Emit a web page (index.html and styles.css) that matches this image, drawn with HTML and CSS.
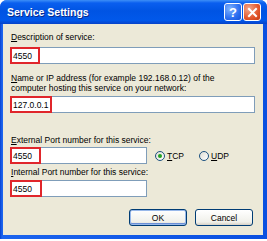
FILE: index.html
```html
<!DOCTYPE html>
<html lang="en">
<head>
    <meta charset="UTF-8">
    <title>Service Settings</title>
    <link rel="stylesheet" href="styles.css">
</head>
<body>

    <div class="window">
        <div class="titlebar">
            <span class="title">Service Settings</span>
            <span class="tb-btn help">?</span>
            <span class="tb-btn close">
                <svg width="11" height="11" viewBox="0 0 11 11"><path d="M2 2 L9 9 M9 2 L2 9" stroke="#fff" stroke-width="2" stroke-linecap="square"/></svg>
            </span>
        </div>

        <div class="content">
            <div class="label first"><u>D</u>escription of service:</div>
            <div class="field wide"><span class="mark w30">4550</span></div>

            <div class="label two-line"><u>N</u>ame or IP address (for example 192.168.0.12) of the<br>computer hosting this service on your network:</div>
            <div class="field wide tight"><span class="mark w41">127.0.0.1</span></div>

            <div class="label far"><u>E</u>xternal Port number for this service:</div>
            <div class="port-row">
                <div class="field narrow"><span class="mark w31">4550</span></div>
                <label class="radio"><span class="dot checked"></span><u>T</u>CP</label>
                <label class="radio"><span class="dot"></span><u>U</u>DP</label>
            </div>

            <div class="label near"><u>I</u>nternal Port number for this service:</div>
            <div class="field narrow tight"><span class="mark w32">4550</span></div>

            <div class="buttons">
                <button class="btn default">OK</button>
                <button class="btn">Cancel</button>
            </div>
        </div>
    </div>

</body>
</html>
```

FILE: styles.css
```css
body { margin: 0; background: #fff; font-family: "Liberation Sans", Arial, sans-serif; font-size: 8.5px; color: #000; }

.window { width: 267px; height: 239px; box-sizing: border-box; display: flex; flex-direction: column; background: linear-gradient(90deg, #0841d0 0, #1c64ee 2px, #0a4fe0 100%); border-radius: 7px 7px 0 0; }
.titlebar { height: 24px; display: flex; align-items: center; padding: 0 6px 0 7px; border-radius: 7px 7px 0 0; background: linear-gradient(#3d8ff7 0, #0a5fef 3px, #0054e3 45%, #0158ea 85%, #0742c8 100%); }
.title { flex: 1; color: #fff; font-weight: bold; font-size: 10.5px; text-shadow: 1px 1px #0b2a8a; }
.tb-btn { width: 16px; height: 16px; border: 1px solid #fff; border-radius: 3px; margin-left: 1px; display: flex; align-items: center; justify-content: center; color: #fff; font-weight: bold; font-size: 13px; }
.help { background: radial-gradient(circle at 30% 30%, #7eb3ff, #2d6ff0 60%, #1450d8); }
.close { background: radial-gradient(circle at 30% 30%, #f3a78b, #e3572c 60%, #c63b12); }

.content { flex: 1; margin: 0 4px 4px 3px; background: #ece9d8; padding: 8px 8px 0 7px; }

.label { line-height: 10px; padding-left: 1px; margin-bottom: 3px; }
.label.first { margin-bottom: 5px; }
.label.two-line { margin-top: 9px; }
.label.far { margin-top: 22px; margin-bottom: 2px; }
.label.near { margin-top: 3px; }

.field { height: 17px; box-sizing: border-box; border: 1px solid #7f9db9; background: #fff; display: flex; }
.field.tight { height: 17px; }
.field.narrow { width: 137px; }

.mark { margin: -1px 0 -1px -1px; border: 2px solid #e0262b; box-sizing: border-box; display: flex; align-items: center; padding-left: 1px; font-size: 8.5px; }
.w30 { width: 30px; }
.w41 { width: 42px; }
.w31 { width: 31px; }
.w32 { width: 32px; }

.port-row { display: flex; align-items: center; }
.radio { display: flex; align-items: center; margin-left: 8px; margin-right: 7px; }
.dot { width: 10px; height: 10px; box-sizing: border-box; border: 1px solid #1c5180; border-radius: 50%; background: linear-gradient(135deg, #dcdcd4, #fff); margin-right: 2px; display: flex; align-items: center; justify-content: center; }
.dot.checked::after { content: ""; width: 4px; height: 4px; border-radius: 50%; background: #21a121; }

.buttons { display: flex; justify-content: flex-end; gap: 8px; margin-top: 12px; padding-right: 2px; }
.btn { width: 58px; height: 17px; padding: 0; border: 1px solid #003c74; border-radius: 3px; background: linear-gradient(#fff, #f0f0ea 80%, #d6d0c5); font-family: "Liberation Sans", Arial, sans-serif; font-size: 8.5px; color: #000; }
.btn.default { box-shadow: inset 0 0 0 1px #98b8ea, inset 0 -1px 0 1px #6b8fd6; }
```
